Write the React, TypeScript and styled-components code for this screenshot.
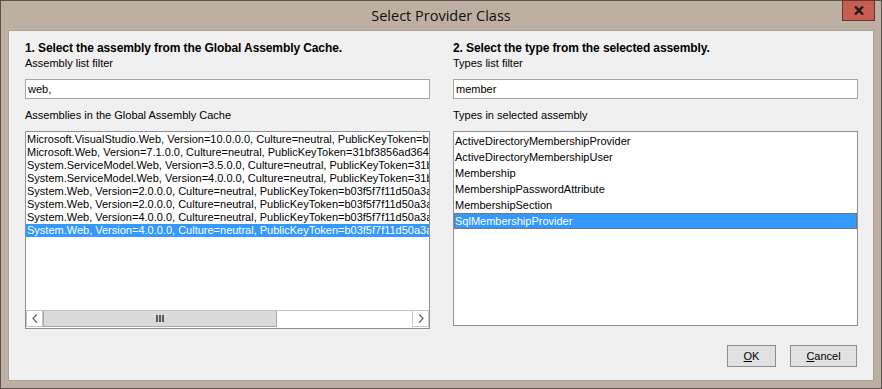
import React from "react";
import styled, { createGlobalStyle } from "styled-components";

const Global = createGlobalStyle`
  html, body { margin: 0; padding: 0; background: #ffffff; }
  body { font-family: "Liberation Sans", Arial, sans-serif; }
  * { box-sizing: border-box; }
`;

const Window = styled.div`
  width: 882px;
  height: 389px;
  background: #bdb0a3;
  border: 1px solid #5a534c;
  display: flex;
  flex-direction: column;
`;

const TitleBar = styled.div`
  height: 29px;
  flex: none;
  display: grid;
  grid-template-columns: 1fr auto 1fr;
  align-items: start;
`;

const Title = styled.div`
  grid-column: 2;
  font-family: "Open Sans", "Noto Sans", sans-serif;
  font-size: 14.5px;
  line-height: 29px;
  color: #111;
`;

const CloseButton = styled.div`
  grid-column: 3;
  justify-self: end;
  margin-top: -1px;
  margin-right: 6px;
  width: 33px;
  height: 21px;
  background: #c75c50;
  border: 1px solid #5e3a34;
  display: flex;
  align-items: center;
  justify-content: center;
`;

const Client = styled.div`
  flex: 1;
  margin: 0 7px 7px 7px;
  background: #f0f0f0;
  border: 1px solid #aaa39b;
  display: flex;
  flex-direction: column;
  padding: 10px 16px 0 16px;
  font-family: "Liberation Sans", Arial, sans-serif;
  font-size: 11px;
  color: #000;
`;

const Columns = styled.div`
  display: grid;
  grid-template-columns: 405px 405px;
  column-gap: 23px;
  align-items: start;
`;

const Column = styled.div`
  display: flex;
  flex-direction: column;
`;

const Heading = styled.div`
  font-weight: bold;
  font-size: 12px;
  letter-spacing: -0.1px;
  line-height: 14px;
  height: 14px;
  white-space: nowrap;
`;

const Label = styled.div<{ $gap: number }>`
  margin-top: ${(p) => p.$gap}px;
  line-height: 13px;
  height: 13px;
  white-space: nowrap;
`;

const TextInput = styled.div`
  margin-top: 9px;
  height: 20px;
  background: #fff;
  border: 1px solid #a6a6a6;
  padding: 0 2px;
  line-height: 18px;
  white-space: nowrap;
`;

const ListBox = styled.div<{ $h: number }>`
  margin-top: 9px;
  height: ${(p) => p.$h}px;
  background: #fff;
  border: 1px solid #8e8f94;
  display: flex;
  flex-direction: column;
  overflow: hidden;
`;

const Items = styled.div`
  flex: 1;
  overflow: hidden;
  padding-top: 1px;
`;

const Row = styled.div<{ $h: number; $sel?: boolean; $focus?: boolean }>`
  height: ${(p) => p.$h}px;
  white-space: nowrap;
  overflow: hidden;
  background: ${(p) => (p.$sel ? "#3399ff" : "transparent")};
  color: ${(p) => (p.$sel ? "#fff" : "#000")};
  border: ${(p) => (p.$focus ? "1px dotted #b35900" : "none")};
  line-height: ${(p) => (p.$focus ? p.$h - 2 : p.$h)}px;
  padding-left: ${(p) => (p.$focus ? 0 : 1)}px;
`;

const ScrollBar = styled.div`
  height: 17px;
  flex: none;
  display: flex;
  background: #ffffff;
  border-top: 1px solid #c6c6c6;
  margin: 0 0 1px 0;
`;

const ArrowBtn = styled.div`
  width: 17px;
  height: 100%;
  flex: none;
  display: flex;
  align-items: center;
  justify-content: center;
  border: 1px solid #c6c6c6;
  border-top: none;
  background: #fff;
`;

const Thumb = styled.div<{ $w: number }>`
  width: ${(p) => p.$w}px;
  flex: none;
  height: 100%;
  background: #dadada;
  border: 1px solid #a8a8a8;
  border-top: none;
  display: flex;
  align-items: center;
  justify-content: center;
`;

const Track = styled.div`
  flex: 1;
  background: #fff;
`;

const Footer = styled.div`
  margin-top: 16px;
  display: flex;
  justify-content: flex-end;
  gap: 14px;
`;

const Button = styled.div<{ $w: number }>`
  width: ${(p) => p.$w}px;
  height: 22px;
  background: #e1e1e1;
  border: 1px solid #8c8c8c;
  display: flex;
  align-items: center;
  justify-content: center;
  font-size: 11px;
`;

const assemblies = [
  "Microsoft.VisualStudio.Web, Version=10.0.0.0, Culture=neutral, PublicKeyToken=b03f5f7f11d50a3a",
  "Microsoft.Web, Version=7.1.0.0, Culture=neutral, PublicKeyToken=31bf3856ad364e35",
  "System.ServiceModel.Web, Version=3.5.0.0, Culture=neutral, PublicKeyToken=31bf3856ad364e35",
  "System.ServiceModel.Web, Version=4.0.0.0, Culture=neutral, PublicKeyToken=31bf3856ad364e35",
  "System.Web, Version=2.0.0.0, Culture=neutral, PublicKeyToken=b03f5f7f11d50a3a",
  "System.Web, Version=2.0.0.0, Culture=neutral, PublicKeyToken=b03f5f7f11d50a3a",
  "System.Web, Version=4.0.0.0, Culture=neutral, PublicKeyToken=b03f5f7f11d50a3a",
  "System.Web, Version=4.0.0.0, Culture=neutral, PublicKeyToken=b03f5f7f11d50a3a",
];

const types = [
  "ActiveDirectoryMembershipProvider",
  "ActiveDirectoryMembershipUser",
  "Membership",
  "MembershipPasswordAttribute",
  "MembershipSection",
  "SqlMembershipProvider",
];

const Chevron = ({ dir }: { dir: "left" | "right" }) => (
  <svg width="6" height="9" viewBox="0 0 6 9">
    <polyline
      points={dir === "left" ? "5,0.5 1,4.5 5,8.5" : "1,0.5 5,4.5 1,8.5"}
      fill="none"
      stroke="#606060"
      strokeWidth="1.2"
    />
  </svg>
);

const Grip = () => (
  <svg width="8" height="7" viewBox="0 0 8 7">
    <rect x="0" y="0" width="2" height="7" fill="#5a5a5a" />
    <rect x="3" y="0" width="2" height="7" fill="#5a5a5a" />
    <rect x="6" y="0" width="2" height="7" fill="#5a5a5a" />
  </svg>
);

export default function App() {
  return (
    <>
      <Global />
      <Window>
        <TitleBar>
          <Title>Select Provider Class</Title>
          <CloseButton>
            <svg width="10" height="9" viewBox="0 0 10 9">
              <path d="M1 0.5 L9 8.5 M9 0.5 L1 8.5" stroke="#1a1a1a" strokeWidth="2.4" />
            </svg>
          </CloseButton>
        </TitleBar>
        <Client>
          <Columns>
            <Column>
              <Heading>1. Select the assembly from the Global Assembly Cache.</Heading>
              <Label $gap={2}>Assembly list filter</Label>
              <TextInput>web,</TextInput>
              <Label $gap={10}>Assemblies in the Global Assembly Cache</Label>
              <ListBox $h={198}>
                <Items>
                  {assemblies.map((a, i) => (
                    <Row key={i} $h={13} $sel={i === assemblies.length - 1}>
                      {a}
                    </Row>
                  ))}
                </Items>
                <ScrollBar>
                  <ArrowBtn>
                    <Chevron dir="left" />
                  </ArrowBtn>
                  <Thumb $w={234}>
                    <Grip />
                  </Thumb>
                  <Track />
                  <ArrowBtn>
                    <Chevron dir="right" />
                  </ArrowBtn>
                </ScrollBar>
              </ListBox>
            </Column>
            <Column>
              <Heading>2. Select the type from the selected assembly.</Heading>
              <Label $gap={2}>Types list filter</Label>
              <TextInput>member</TextInput>
              <Label $gap={10}>Types in selected assembly</Label>
              <ListBox $h={195}>
                <Items>
                  {types.map((t, i) => (
                    <Row
                      key={t}
                      $h={16}
                      $sel={i === types.length - 1}
                      $focus={i === types.length - 1}
                    >
                      {t}
                    </Row>
                  ))}
                </Items>
              </ListBox>
            </Column>
          </Columns>
          <Footer>
            <Button $w={49}>
              <span>
                <u>O</u>K
              </span>
            </Button>
            <Button $w={67}>
              <span>
                <u>C</u>ancel
              </span>
            </Button>
          </Footer>
        </Client>
      </Window>
    </>
  );
}
